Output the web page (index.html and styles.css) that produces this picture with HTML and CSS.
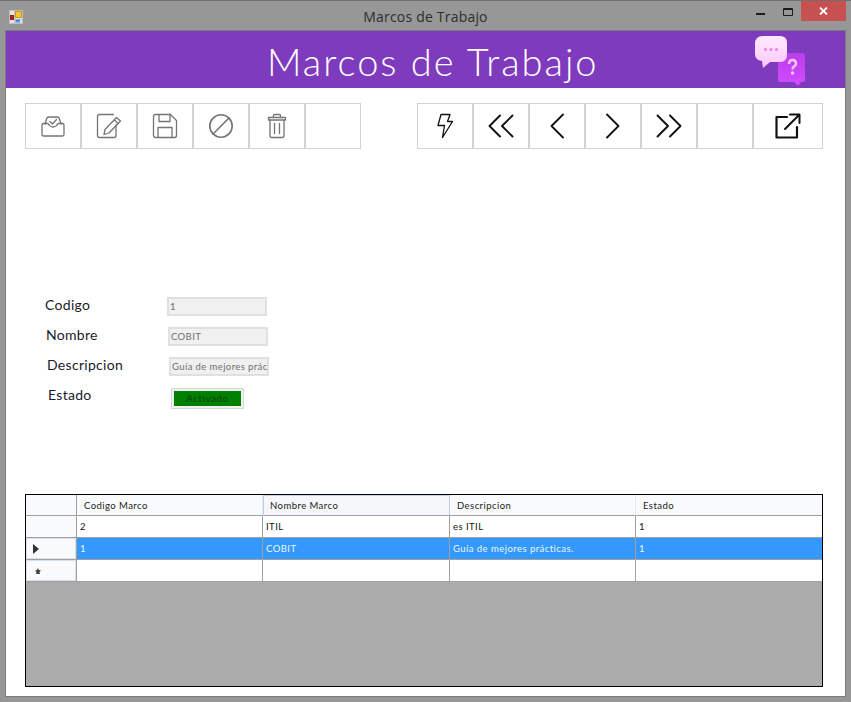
FILE: index.html
```html
<!DOCTYPE html>
<html lang="es">

<head>
    <meta charset="UTF-8">
    <title>Marcos de Trabajo</title>
    <link rel="stylesheet" href="styles.css">
</head>

<body>
    <div class="window">
        <div class="titlebar">
            <div class="app-icon">
                <svg width="14" height="14" viewBox="0 0 14 14">
                    <rect x="0.5" y="0.5" width="13" height="13" fill="#e4e4e4" stroke="#bdbdbd" />
                    <path d="M0.5 9.500H13.500M5.500 0.500V13.500" stroke="#c4c4c4" />
                    <rect x="1.500" y="5.500" width="3" height="4" fill="#c81e1e" stroke="#7d1010" stroke-width="0.800" />
                    <rect x="6.500" y="1.500" width="6" height="6" fill="#f6c628" stroke="#b98a10" stroke-width="0.800" />
                    <rect x="6.500" y="9.500" width="4.500" height="3" fill="#4d8fe0" />
                </svg>
            </div>
            <div class="window-title">Marcos de Trabajo</div>
            <div class="window-controls">
                <svg class="ctl-min" width="9" height="2" viewBox="0 0 9 2">
                    <rect width="9" height="2" fill="#1c1c1c" />
                </svg>
                <svg class="ctl-max" width="10" height="8" viewBox="0 0 10 8">
                    <path d="M0.500 0.500H9.500V7.500H0.500Z M0.500 1.500H9.500" fill="none" stroke="#1c1c1c" />
                </svg>
                <div class="ctl-close">
                    <svg width="9" height="8" viewBox="0 0 9 8">
                        <path d="M1 0.500L8 7.500M8 0.500L1 7.500" stroke="#fff" stroke-width="1.800" />
                    </svg>
                </div>
            </div>
        </div>

        <div class="client">
            <div class="banner">
                <h1>Marcos de Trabajo</h1>
                <svg class="banner-icon" width="52" height="52" viewBox="0 0 52 52">
                    <defs>
                        <linearGradient id="pinkBubble" x1="0" y1="0" x2="0" y2="1">
                            <stop offset="0" stop-color="#ffeaff" />
                            <stop offset="1" stop-color="#fbc6fb" />
                        </linearGradient>
                        <linearGradient id="purpleBubble" x1="0" y1="0" x2="0" y2="1">
                            <stop offset="0" stop-color="#b93dee" />
                            <stop offset="1" stop-color="#d44bff" />
                        </linearGradient>
                    </defs>
                    <path d="M23 19Q23 17 25 17H48Q50 17 50 19V44Q50 46 48 46H46L43 50L39 46H25Q23 46 23 44Z"
                        fill="url(#purpleBubble)" />
                    <path d="M8 0H25Q32 0 32 7V19Q32 26 25 26H15L8 32L7 25Q0 24 0 18V8Q0 0 8 0Z"
                        fill="url(#pinkBubble)" />
                    <circle cx="10.500" cy="13.500" r="1.500" fill="#f07ef0" />
                    <circle cx="16" cy="13.500" r="1.500" fill="#f07ef0" />
                    <circle cx="21.500" cy="13.500" r="1.500" fill="#f07ef0" />
                    <path d="M34 28Q34 24 37.500 24Q41 24 41 27.500Q41 29.500 39 30.500Q37.500 31.300 37.500 33.500" fill="none"
                        stroke="#fbc6fb" stroke-width="2.400" />
                    <circle cx="37.500" cy="37" r="1.700" fill="#fbc6fb" />
                </svg>
            </div>

            <div class="toolbars">
                <div class="toolbar toolbar-gray">
                    <div class="tool">
                        <svg width="26" height="24" viewBox="0 0 26 24">
                            <path d="M5 10L6.500 5Q7 3 9 3H17Q19 3 19.500 5L21 10" />
                            <path d="M2 11Q2 9.500 3.500 9.500H8Q10 13 13 13Q16 13 18 9.500H22.500Q24 9.500 24 11V20.500Q24 22 22.500 22H3.500Q2 22 2 20.500Z" />
                            <path d="M10 7.500L12.500 10L16.500 5.500" />
                        </svg>
                    </div>
                    <div class="tool">
                        <svg width="26" height="26" viewBox="0 0 26 26">
                            <path d="M20 12V22.500Q20 24.500 18 24.500H3.500Q1.500 24.500 1.500 22.500V3.500Q1.500 1.500 3.500 1.500H17.500" />
                            <path d="M20.500 4.500L24.500 8L13 20L8 21.500L9 16.500Z" />
                            <path d="M18.500 7L22 10.500" />
                        </svg>
                    </div>
                    <div class="tool">
                        <svg width="26" height="26" viewBox="0 0 26 26">
                            <path d="M1.500 3.500Q1.500 1.500 3.500 1.500H18.500L24.500 7.500V22.500Q24.500 24.500 22.500 24.500H3.500Q1.500 24.500 1.500 22.500Z" />
                            <path d="M7 1.500V8.500H18V1.500" />
                            <path d="M6 24.500V14.500H20V24.500" />
                        </svg>
                    </div>
                    <div class="tool">
                        <svg width="26" height="26" viewBox="0 0 26 26">
                            <circle cx="13" cy="13" r="11.200" stroke-width="1.600" />
                            <path d="M5 21L21 5" stroke-width="1.600" />
                        </svg>
                    </div>
                    <div class="tool">
                        <svg width="20" height="26" viewBox="0 0 20 26">
                            <path d="M1.500 7V4.500H18.500V7Z" />
                            <path d="M6.500 4.500V2.500Q6.500 1.500 7.500 1.500H12.500Q13.500 1.500 13.500 2.500V4.500" />
                            <path d="M3 7V22.500Q3 24.500 5 24.500H15Q17 24.500 17 22.500V7" />
                            <path d="M7.500 10.500V20.500M12.500 10.500V20.500" />
                        </svg>
                    </div>
                    <div class="tool"></div>
                </div>

                <div class="toolbar toolbar-black">
                    <div class="tool">
                        <svg width="18" height="26" viewBox="0 0 18 26">
                            <path d="M5 1.500H14L11.500 8.500H16.500L6.500 24.500L8.500 12.500H2Z" />
                        </svg>
                    </div>
                    <div class="tool">
                        <svg width="26" height="26" viewBox="0 0 26 26">
                            <path d="M12 2.500L1.500 13L12 23.500M24.500 2.500L14 13L24.500 23.500" stroke-width="1.900" />
                        </svg>
                    </div>
                    <div class="tool">
                        <svg width="14" height="26" viewBox="0 0 14 26">
                            <path d="M13 1.500L1.500 13L13 24.500" stroke-width="1.800" />
                        </svg>
                    </div>
                    <div class="tool">
                        <svg width="14" height="26" viewBox="0 0 14 26">
                            <path d="M1 1.500L12.500 13L1 24.500" stroke-width="1.800" />
                        </svg>
                    </div>
                    <div class="tool">
                        <svg width="26" height="26" viewBox="0 0 26 26">
                            <path d="M1.500 2.500L12 13L1.500 23.500M14 2.500L24.500 13L14 23.500" stroke-width="1.900" />
                        </svg>
                    </div>
                    <div class="tool"></div>
                    <div class="tool tool-wide">
                        <svg width="26" height="26" viewBox="0 0 26 26">
                            <path d="M12 4H1.500V24.500H22V14" stroke-width="2.200" />
                            <path d="M10 16L24.500 1.500M15 1.500H24.500V10" stroke-width="2" />
                        </svg>
                    </div>
                </div>
            </div>

            <div class="form">
                <div class="form-row">
                    <div class="form-label">Codigo</div>
                    <div class="field">1</div>
                </div>
                <div class="form-row">
                    <div class="form-label">Nombre</div>
                    <div class="field">COBIT</div>
                </div>
                <div class="form-row">
                    <div class="form-label">Descripcion</div>
                    <div class="field">Guía de mejores prác</div>
                </div>
                <div class="form-row form-row-state">
                    <div class="form-label">Estado</div>
                    <div class="state-box">
                        <div class="state-value">Activado</div>
                    </div>
                </div>
            </div>

            <div class="grid-view">
                <table>
                    <colgroup>
                        <col class="col-head">
                        <col class="col-data">
                        <col class="col-data-b">
                        <col class="col-data">
                        <col class="col-data">
                    </colgroup>
                    <thead>
                        <tr>
                            <th class="row-head"></th>
                            <th>Codigo Marco</th>
                            <th class="sorted">Nombre Marco</th>
                            <th>Descripcion</th>
                            <th>Estado</th>
                        </tr>
                    </thead>
                    <tbody>
                        <tr>
                            <td class="row-head"></td>
                            <td>2</td>
                            <td>ITIL</td>
                            <td>es ITIL</td>
                            <td>1</td>
                        </tr>
                        <tr class="selected">
                            <td class="row-head current">
                                <svg width="6" height="10" viewBox="0 0 6 10">
                                    <path d="M0 0L6 5L0 10Z" fill="#333" />
                                </svg>
                            </td>
                            <td>1</td>
                            <td>COBIT</td>
                            <td>Guía de mejores prácticas.</td>
                            <td>1</td>
                        </tr>
                        <tr>
                            <td class="row-head current row-new">
                                <svg width="6" height="6" viewBox="0 0 6 6">
                                    <path d="M3 0L4 2L6 2.500L4.500 4L5 6H1L1.500 4L0 2.500L2 2Z" fill="#444" />
                                </svg>
                            </td>
                            <td></td>
                            <td></td>
                            <td></td>
                            <td></td>
                        </tr>
                    </tbody>
                </table>
            </div>
        </div>
    </div>
</body>

</html>
```

FILE: styles.css
```css
html,
body {
    margin: 0;
    padding: 0;
}

body {
    width: 851px;
    height: 702px;
    overflow: hidden;
    background-color: #979797;
    font-family: "Lato", "Open Sans", sans-serif;
}

.window {
    height: 702px;
    display: flex;
    flex-direction: column;
    box-sizing: border-box;
    border-top: 1px solid #6f6f6f;
}

/* Title bar */
.titlebar {
    height: 29px;
    flex: none;
    display: grid;
    grid-template-columns: 1fr auto 1fr;
}

.app-icon {
    padding: 7px 0 0 9px;
}

.window-title {
    padding-top: 6px;
    font-family: "Open Sans", sans-serif;
    font-size: 14px;
    line-height: 19px;
    letter-spacing: 0.2px;
    color: #2a2f33;
}

.window-controls {
    display: flex;
    justify-content: flex-end;
    align-items: flex-start;
    padding-right: 5px;
}

.ctl-min {
    margin: 12px 18px 0 0;
}

.ctl-max {
    margin: 7px 8px 0 0;
}

.ctl-close {
    width: 45px;
    height: 20px;
    display: flex;
    align-items: center;
    justify-content: center;
    background-color: #c75050;
}

/* Client area */
.client {
    flex: 1;
    margin: 0 5px 5px;
    border: 1px solid #7c7c7c;
    background-color: #fff;
}

.banner {
    height: 57px;
    display: flex;
    justify-content: space-between;
    background-color: #7e3bbd;
    color: #fff;
}

.banner h1 {
    margin: 0;
    padding-left: 261px;
    font-size: 38px;
    font-weight: 300;
    line-height: 60px;
    letter-spacing: 2px;
    white-space: nowrap;
}

.banner-icon {
    margin: 5px 38px 0 0;
}

/* Toolbars */
.toolbars {
    display: flex;
    justify-content: space-between;
    padding: 15px 22px 0 19px;
}

.toolbar {
    display: flex;
}

.tool {
    width: 56px;
    height: 46px;
    box-sizing: border-box;
    border: 1px solid #d2d2d2;
    display: flex;
    align-items: center;
    justify-content: center;
}

.tool-wide {
    width: 70px;
}

.tool svg {
    fill: none;
    stroke-width: 1.300;
    stroke-linejoin: round;
    stroke-linecap: round;
}

.toolbar-gray svg {
    stroke: #747474;
}

.toolbar-black svg {
    stroke: #111;
}

/* Form */
.form {
    padding: 148px 0 0 39px;
    display: flex;
    flex-direction: column;
    gap: 11px;
}

.form-row {
    display: flex;
    height: 19px;
}

.form-row:nth-child(2) {
    margin-left: 1px;
}

.form-row:nth-child(3) {
    margin-left: 2px;
}

.form-row-state {
    height: 21px;
    margin: 1px 0 0 3px;
}

.form-label {
    width: 122px;
    flex: none;
    margin-top: -1px;
    font-size: 14px;
    line-height: 17px;
    color: #1a1a2a;
    letter-spacing: 0.3px;
}

.form-row-state .form-label {
    width: 123px;
    margin-top: -2px;
}

.field {
    width: 100px;
    box-sizing: border-box;
    border: 2px solid #e0e0e0;
    padding-left: 1px;
    background-color: #f0f0f0;
    font-size: 9.500px;
    line-height: 16px;
    letter-spacing: 0.4px;
    color: #6d6d6d;
    white-space: nowrap;
    overflow: hidden;
}

.state-box {
    width: 73px;
    height: 21px;
    box-sizing: border-box;
    border: 1px solid #d6d6d6;
    padding: 2px;
    background-color: #f0f0f0;
}

.state-value {
    height: 15px;
    background-color: #008000;
    font-size: 9.500px;
    line-height: 15px;
    letter-spacing: 0.7px;
    text-align: center;
    color: #0c3f0c;
}

/* Data grid */
.grid-view {
    width: 798px;
    height: 193px;
    box-sizing: border-box;
    margin: 85px 0 0 19px;
    border: 1px solid #000;
    background-color: #ababab;
}

table {
    width: 796px;
    table-layout: fixed;
    border-spacing: 0;
    font-size: 9.500px;
    letter-spacing: 0.45px;
    color: #111;
}

.col-head {
    width: 51px;
}

.col-data {
    width: 186px;
}

.col-data-b {
    width: 187px;
}

th,
td {
    box-sizing: border-box;
    height: 22px;
    padding: 0 3px;
    border-right: 1px solid #a0a0a0;
    border-bottom: 1px solid #a0a0a0;
    background-color: #fff;
    text-align: left;
    font-weight: 400;
    white-space: nowrap;
    overflow: hidden;
}

th {
    height: 21px;
    padding-left: 7px;
    background-color: #f9fafb;
    border-right-color: #e6eaf0;
    color: #222;
}

th.sorted {
    border: 1px solid #c3cfe2;
    border-bottom: 1px solid #a0a0a0;
    padding-left: 6px;
    background-color: #f5f7fa;
}

th:last-child,
td:last-child {
    border-right: none;
}

.row-head {
    padding: 0 0 0 7px;
    background-color: #f9fafb;
    border-right-color: #a0a0a0;
}

.row-head.current {
    box-shadow: inset 0 0 0 1px #d7e0ee;
}

.row-new {
    padding-left: 9px;
}

.row-head svg {
    display: block;
}

.selected td {
    background-color: #3399ff;
    color: #eef6ff;
}

.selected td.row-head {
    background-color: #f9fafb;
}
```
